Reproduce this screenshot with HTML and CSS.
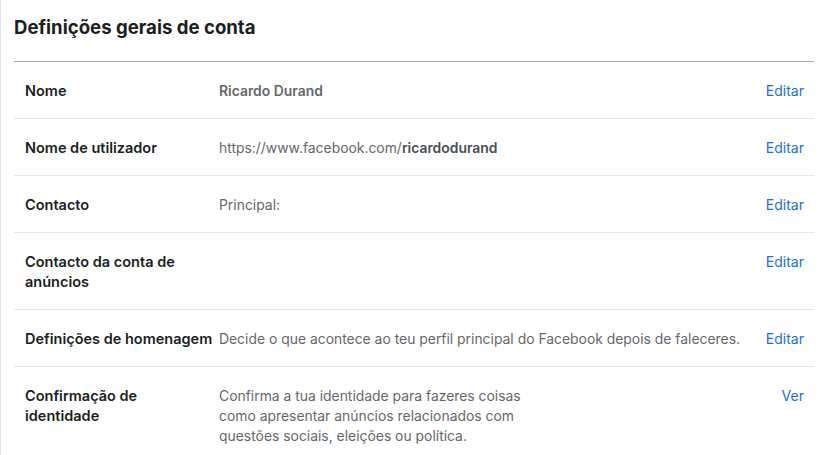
FILE: index.html
```html
<!DOCTYPE html>
<html lang="pt">
<head>
<meta charset="utf-8">
<title>Definições gerais de conta</title>
<link rel="stylesheet" href="styles.css">
</head>
<body>
<div class="page">
  <h1 class="title">Definições gerais de conta</h1>
  <div class="list">
    <div class="row">
      <div class="label">Nome</div>
      <div class="value strong">Ricardo Durand</div>
      <a class="action" href="#">Editar</a>
    </div>
    <div class="row">
      <div class="label">Nome de utilizador</div>
      <div class="value">https://www.facebook.com/<b class="dark">ricardodurand</b></div>
      <a class="action" href="#">Editar</a>
    </div>
    <div class="row">
      <div class="label">Contacto</div>
      <div class="value">Principal:</div>
      <a class="action" href="#">Editar</a>
    </div>
    <div class="row">
      <div class="label">Contacto da conta de anúncios</div>
      <div class="value"></div>
      <a class="action" href="#">Editar</a>
    </div>
    <div class="row">
      <div class="label">Definições de homenagem</div>
      <div class="value">Decide o que acontece ao teu perfil principal do Facebook depois de faleceres.</div>
      <a class="action" href="#">Editar</a>
    </div>
    <div class="row">
      <div class="label">Confirmação de identidade</div>
      <div class="value narrow">Confirma a tua identidade para fazeres coisas como apresentar anúncios relacionados com questões sociais, eleições ou política.</div>
      <a class="action" href="#">Ver</a>
    </div>
  </div>
</div>
</body>
</html>
```
FILE: styles.css
```css
* { box-sizing: border-box; }
html, body { margin: 0; padding: 0; background: #fff; }
body {
  font-family: Inter, "Noto Sans", "Liberation Sans", sans-serif;
  color: #1c1e21;
  border-left: 1px solid #e4e4e4;
  min-height: 455px;
}
.page { padding: 0 12px 0 13px; }
.title {
  margin: 0;
  height: 62px;
  padding-top: 15px;
  font-size: 18.6px;
  line-height: 24px;
  font-weight: 700;
  color: #1c1e21;
  border-bottom: 1px solid #aaaaaa;
}
.row {
  display: flex;
  align-items: flex-start;
  padding: 19px 10px 17px 11px;
  border-bottom: 1px solid #e6e6e6;
  font-size: 14px;
  line-height: 20px;
}
.row:last-child { border-bottom: none; }
.label {
  width: 194px;
  flex: none;
  font-size: 14.5px;
  font-weight: 600;
  color: #1c1e21;
  padding-right: 5px;
}
.value {
  flex: 1;
  color: #65676b;
  font-size: 13.9px;
}
.value.narrow { flex: 0 1 310px; margin-right: auto; }
.value.strong { font-weight: 600; }
.dark { font-weight: 600; color: #4b4f56; }
.action {
  flex: none;
  margin-left: 16px;
  color: #216fdb;
  text-decoration: none;
}
```
